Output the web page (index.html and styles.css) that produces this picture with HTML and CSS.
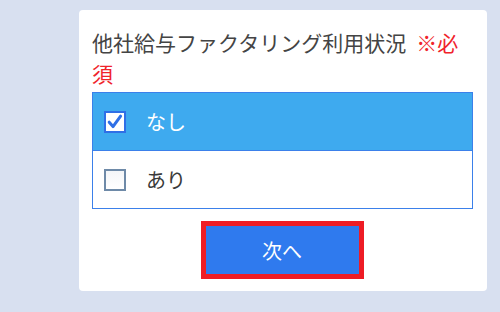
FILE: index.html
```html
<!DOCTYPE html>
<html lang="ja">
<head>
<meta charset="utf-8">
<link rel="stylesheet" href="styles.css">
</head>
<body>
<div class="card">
  <h2 class="title">他社給与ファクタリング利用状況<span class="req">※必須</span></h2>
  <div class="options">
    <label class="opt opt-on">
      <span class="box box-on">
        <svg viewBox="0 0 22 22" width="22" height="22"><path d="M5.2 11.2 L9 15.6 L16.6 5.2" fill="none" stroke="#2f6fe6" stroke-width="3" stroke-linecap="round" stroke-linejoin="round"/></svg>
      </span>
      <span class="lbl">なし</span>
    </label>
    <label class="opt">
      <span class="box"></span>
      <span class="lbl">あり</span>
    </label>
  </div>
  <div class="actions">
    <button class="next">次へ</button>
  </div>
</div>
</body>
</html>
```
FILE: styles.css
```css
html, body {
  margin: 0;
  padding: 0;
  background: #d8e0f0;
  font-family: "Noto Sans CJK JP", "Noto Sans", sans-serif;
}
body {
  height: 312px;
  overflow: hidden;
}
.card {
  margin: 10px 0 0 79px;
  width: 408px;
  box-sizing: border-box;
  background: #fff;
  border-radius: 4px;
  padding: 17px 14px 12px 13px;
}
.title {
  margin: 0;
  font-size: 21px;
  line-height: 31px;
  font-weight: 400;
  color: #444;
  width: 381px;
}
.req {
  color: #f0232b;
  margin-left: 10px;
}
.options {
  margin-top: 3px;
  width: 381px;
  box-sizing: border-box;
  border: 1px solid #3b80ea;
}
.opt {
  display: flex;
  align-items: center;
  height: 57px;
  padding-left: 11px;
  background: #fff;
  color: #3a3a3a;
}
.opt + .opt {
  border-top: 1px solid #3b80ea;
}
.opt-on {
  background: #3eaaef;
  color: #fff;
}
.box {
  width: 22px;
  height: 22px;
  box-sizing: border-box;
  border: 2px solid #6e8aa8;
  background: linear-gradient(#f4f6f8, #ffffff);
  display: flex;
  align-items: center;
  justify-content: center;
}
.box-on {
  border: 2px solid #2f6fe6;
  background: #fff;
}
.box svg {
  display: block;
  flex: none;
}
.lbl {
  margin-left: 20px;
  font-size: 20px;
  line-height: 24px;
}
.actions {
  display: flex;
  justify-content: center;
  margin-top: 12px;
}
.next {
  width: 163px;
  height: 58px;
  box-sizing: border-box;
  border: 5px solid #ee1c25;
  background: #2f7aee;
  color: #fff;
  font-family: "Noto Sans CJK JP", "Noto Sans", sans-serif;
  font-size: 20px;
  padding: 0;
  margin-left: -1px;
}
```
